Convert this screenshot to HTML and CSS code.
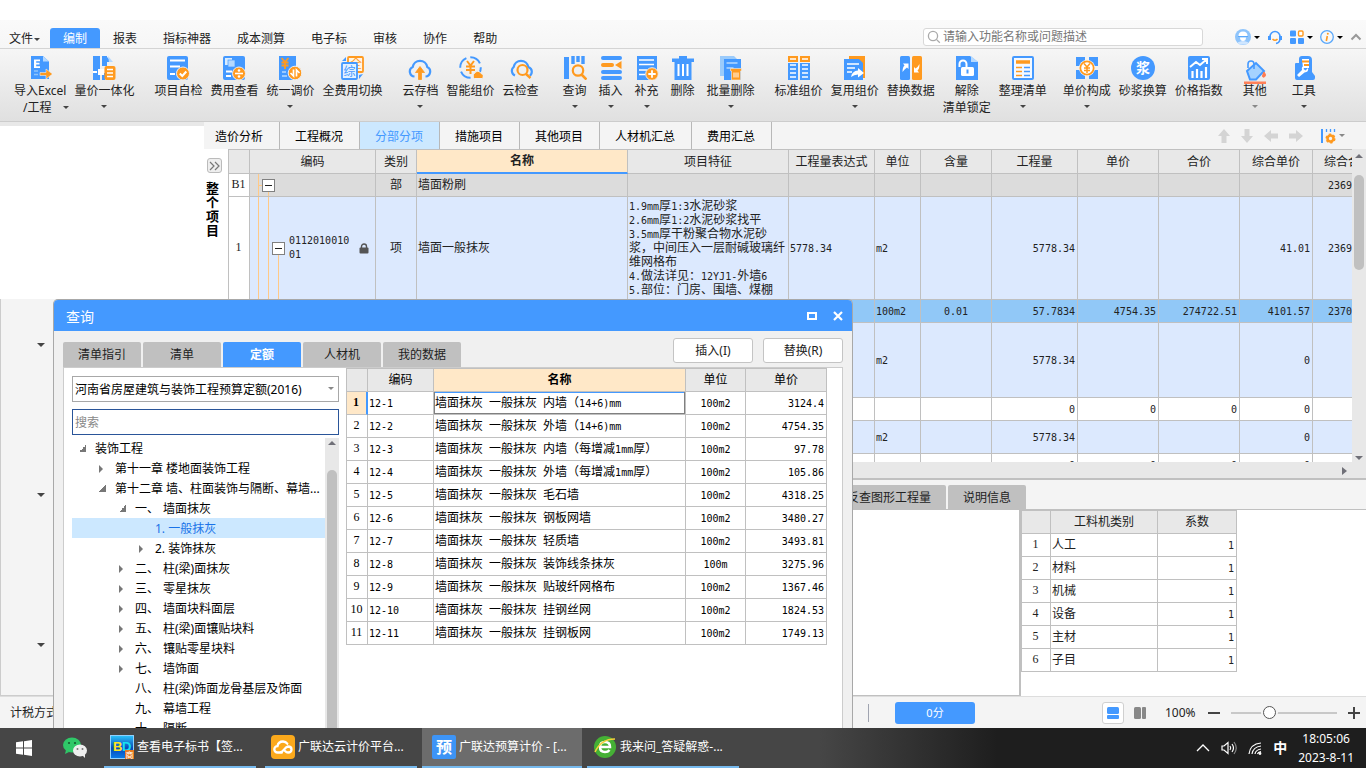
FILE: index.html
```
<!DOCTYPE html>
<html lang="zh-CN">
<head>
    <meta charset="UTF-8">
    <meta name="viewport" content="width=device-width, initial-scale=1.0">
    <title>广联达预算计价</title>
    <link rel="stylesheet" href="styles.css">
</head>
<body>
<div class="app">
    <!-- menu bar -->
    <header class="menubar">
        <nav class="menu">
            <button class="menu-item file">文件<i class="caret small"></i></button>
            <button class="menu-item active">编制</button>
            <button class="menu-item">报表</button>
            <button class="menu-item">指标神器</button>
            <button class="menu-item">成本测算</button>
            <button class="menu-item">电子标</button>
            <button class="menu-item">审核</button>
            <button class="menu-item">协作</button>
            <button class="menu-item">帮助</button>
        </nav>
        <label class="search">
            <svg width="14" height="14" viewBox="0 0 14 14" fill="none" stroke="#aaa" stroke-width="1.3"><circle cx="6" cy="6" r="4.6"/><path d="M9.4 9.4l3.4 3.4"/></svg>
            <input type="text" placeholder="请输入功能名称或问题描述" aria-label="功能搜索">
        </label>
        <div class="menu-right">
            <button aria-label="用户"><svg width="16" height="16" viewBox="0 0 16 16"><circle cx="8" cy="8" r="8" fill="#8ec4fb"/><path d="M3.500 7q0-4.500 4.500-4.500t4.500 4.500z" fill="#fff"/><path d="M3 7.500h10" stroke="#5aa8fb"/><path d="M5 8.500q0 3.500 3 3.500t3-3.500z" fill="#fff"/><path d="M2.500 13.500q5.500-3 11 0l-2 2h-7z" fill="#cfe6ff"/></svg><i class="caret dark"></i></button>
            <button aria-label="客服"><svg width="16" height="16" viewBox="0 0 16 16" fill="none"><path d="M3 8a5 5.500 0 0 1 10 0" stroke="#49f" stroke-width="1.500"/><path d="M2.500 7v4M13.500 7v4" stroke="#49f" stroke-width="3"/><path d="M13 11q-1 3-4 3.500" stroke="#49f" stroke-width="1.500"/><path d="M5.500 10q2.500 2.500 5 0" stroke="#ff9a1f" stroke-width="1.500"/></svg></button>
            <button aria-label="应用"><svg width="14" height="14" viewBox="0 0 14 14"><rect y="0.500" width="6" height="6" rx="1" fill="#49f"/><rect x="8.500" y="1" width="4.500" height="5" rx="1" fill="#fff" stroke="#ff9a1f" stroke-width="1.400"/><rect y="8" width="6" height="6" rx="1" fill="#49f"/><rect x="8" y="8" width="6" height="6" rx="1" fill="#49f"/></svg><i class="caret dark"></i></button>
            <button aria-label="关于"><svg width="14" height="14" viewBox="0 0 14 14" fill="none"><circle cx="7" cy="7" r="6.300" stroke="#5aa8fb" stroke-width="1.300"/><path d="M7.300 6l-1 5" stroke="#ff9a1f" stroke-width="1.600"/><circle cx="7.800" cy="3.700" r="1" fill="#ff9a1f"/></svg><i class="caret dark"></i></button>
            <button aria-label="收起"><svg width="12" height="8" viewBox="0 0 12 8" fill="none" stroke="#999" stroke-width="2"><path d="M1.500 6.500L6 2l4.500 4.500"/></svg></button>
        </div>
    </header>

    <!-- ribbon -->
    <div class="ribbon">
        <div class="group">
            <button class="tool"><svg viewBox="0 0 24 24"><path d="M3 0h12l6 5.500V23H3z" fill="#49f"/><path d="M15 0v5.500h6z" fill="#b5d9ff"/><path d="M6 3.500h6v1.800H8.200v1.500h3.300v1.800H8.200v1.700H12V12H6z" fill="#fff"/><path d="M6 15h4M6 18.500h4" stroke="#8ec4fb" stroke-width="1.500"/><path d="M12 16.500h6v-3.500l6.500 5-6.500 5v-3.500h-6z" fill="#ff9a1f" stroke="#eee" stroke-width=".6"/></svg><span>导入Excel</span><span class="second">/工程<i class="caret beside"></i></span></button>
            <button class="tool"><svg viewBox="0 0 24 24"><path d="M1 0h7v24H1zM10 0h5v10h-5zM10 17h3v7h-3zM14 0l6 6h-6z" fill="#49f"/><path d="M16 0l5 6h-4z" fill="#b5d9ff"/><path d="M1 16h4M9 13v5" stroke="#fff" stroke-width="2"/><rect x="6" y="13" width="6" height="6" fill="#fff"/><rect x="12.500" y="10" width="11" height="14" rx="2" fill="#ff9a1f"/><path d="M15 13.500h6M15 17h6M15 20.500h6" stroke="#fff" stroke-width="1.600"/></svg><span>量价一体化</span><i class="caret"></i></button>
        </div>
        <div class="group">
            <button class="tool"><svg viewBox="0 0 24 24"><rect x="1" width="21" height="24" rx="2" fill="#49f"/><path d="M4 4.500h15M4 10.500h10M4 18h5" stroke="#fff" stroke-width="1.800"/><circle cx="17" cy="17.500" r="6.500" fill="#ff9a1f" stroke="#eee"/><path d="M13.800 17.500l2.500 2.500 4-4.500" stroke="#fff" stroke-width="2" fill="none"/></svg><span>项目自检</span></button>
            <button class="tool"><svg viewBox="0 0 24 24"><rect x="1" width="22" height="24" rx="2" fill="#49f"/><rect x="3" y="2" width="7" height="7" fill="#d9ecff"/><rect x="6" y="4" width="7" height="7" fill="#b5d9ff" stroke="#49f" stroke-width=".7"/><path d="M4 15.500h6M4 20h5" stroke="#fff" stroke-width="1.800"/><circle cx="17" cy="17.500" r="6.500" fill="#ff9a1f" stroke="#eee"/><path d="M13 17.500h8" stroke="#fff" stroke-width="1.600"/><circle cx="17" cy="14.500" r="1.300" fill="#fff"/><circle cx="17" cy="20.500" r="1.300" fill="#fff"/></svg><span>费用查看</span></button>
            <button class="tool"><svg viewBox="0 0 24 24"><path d="M1 0h17v24H1z" fill="#49f"/><path d="M3.500 2l3.500 4 3.500-4M7 6v7M3.500 6.500h7M3.500 9.500h7" stroke="#ff9a1f" stroke-width="1.800" fill="none"/><path d="M4 16h4M4 20h5" stroke="#b5d9ff" stroke-width="1.700"/><circle cx="17" cy="17" r="6.800" fill="#ff9a1f" stroke="#eee"/><path d="M15.500 13.500v6.500l-3-3M18.500 20.500V14l3 3" stroke="#fff" stroke-width="1.700" fill="none"/></svg><span>统一调价</span><i class="caret"></i></button>
            <button class="tool"><svg viewBox="0 0 24 24"><rect x="8" y="1" width="15" height="15" rx="1" fill="#fff4e4" stroke="#ff9a1f" stroke-width="1.800"/><text x="10" y="12" font-size="12" fill="#ff9a1f">全</text><rect x="2" y="7" width="15" height="16" rx="1" fill="#e3f1ff" stroke="#49f" stroke-width="1.800"/><text x="3.500" y="19.500" font-size="12" fill="#49f">综</text><path d="M2 5l4-4v4zM23 18l-4 5v-4z" fill="#49f"/></svg><span>全费用切换</span></button>
        </div>
        <div class="group">
            <button class="tool"><svg viewBox="0 0 24 24" fill="none"><path d="M6.500 20.500A5 5 0 0 1 4.700 11a7.400 7.400 0 0 1 14.600 0 5 5 0 0 1-1.800 9.500" stroke="#49f" stroke-width="2.200"/><path d="M10.500 23.500v-7H7.500L12 10.500l4.500 6h-3v7z" fill="#ff9a1f" stroke="#ff9a1f" stroke-width=".8"/></svg><span>云存档</span><i class="caret"></i></button>
            <button class="tool"><svg viewBox="0 0 24 24" fill="none"><circle cx="11.500" cy="11.500" r="10.300" stroke="#49f" stroke-width="2" stroke-dasharray="12 4"/><path d="M8 5l3.500 4.500L15 5M11.500 9v9M7 10.500h9M7 14h9" stroke="#ff9a1f" stroke-width="2"/><path d="M15.500 22.500a3 3 0 0 1 0-5 3.500 3.500 0 0 1 6.500 0 2.700 2.700 0 0 1 1 5z" fill="#ff9a1f" stroke="#eee"/></svg><span>智能组价</span></button>
            <button class="tool"><svg viewBox="0 0 24 24" fill="none"><path d="M6 19.500A5 5 0 0 1 4.700 11a7.400 7.400 0 0 1 14.600 0q3.500 1.500 3.500 4.500t-2 4" stroke="#49f" stroke-width="2.200"/><circle cx="13.500" cy="14" r="5" stroke="#ff9a1f" stroke-width="2.200"/><path d="M17 18l4.500 4" stroke="#ff9a1f" stroke-width="2.500"/></svg><span>云检查</span></button>
        </div>
        <div class="group wide spaced">
            <button class="tool"><svg viewBox="0 0 24 24" fill="none"><path d="M3.500 1v22" stroke="#49f" stroke-width="5"/><path d="M10 0v8M15 0v6M20 0v8" stroke="#49f" stroke-width="3.400"/><circle cx="15" cy="14.500" r="5.200" stroke="#ff9a1f" stroke-width="2.200"/><path d="M18.500 18.500l5 5" stroke="#ff9a1f" stroke-width="2.600"/></svg><span>查询</span><i class="caret"></i></button>
            <button class="tool"><svg viewBox="0 0 24 24" fill="none" stroke-width="4" stroke-linecap="round"><path d="M4 2h17M4 16h17M4 22h17" stroke="#49f"/><path d="M4 9h9" stroke="#ff9a1f"/><path d="M16 9l6.500-4v8z" fill="#ff9a1f"/></svg><span>插入</span><i class="caret"></i></button>
            <button class="tool"><svg viewBox="0 0 24 24"><path d="M2 0h20v14H2zM2 14h14v10H2z" fill="#49f"/><path d="M4 4h15M4 8.500h15M4 14h8M4 18.500h6" stroke="#fff" stroke-width="1.500"/><circle cx="17" cy="18" r="6.300" fill="#ff9a1f" stroke="#eee"/><path d="M17 14.300v7.400M13.300 18h7.400" stroke="#fff" stroke-width="1.800"/></svg><span>补充</span><i class="caret"></i></button>
            <button class="tool"><svg viewBox="0 0 24 24"><path d="M1 2.500h7V0h8v2.500h7V6H1zM3.500 6h17v18h-17z" fill="#49f"/><path d="M7.500 8v12M12 8v12M16.500 8v12" stroke="#fff" stroke-width="2"/></svg><span>删除</span></button>
            <button class="tool"><svg viewBox="0 0 24 24"><path d="M1 0h14l3 3v17H1z" fill="#9bcbfb"/><path d="M5 3h17v21H5z" fill="#49f"/><path d="M7.500 7h11M7.500 12h7" stroke="#b5d9ff" stroke-width="1.700"/><path d="M11.500 12.500h11v2.500h-1v9h-9v-9h-1z" fill="#ff9a1f" stroke="#eee" stroke-width=".6"/><path d="M15 16.500v5M17 16.500v5M19 16.500v5" stroke="#fff"/></svg><span>批量删除</span><i class="caret"></i></button>
        </div>
        <div class="group">
            <button class="tool"><svg viewBox="0 0 24 24"><path d="M1 7h10v17H1zM13 7h10v17H13z" fill="#49f"/><path d="M1 0h10v6H1zM13 0h10v6H13z" fill="#ff9a1f"/><path d="M3 3h6M15 3h6M3 9h6M15 9h6M3 13h6M15 13h6M3 17h6M15 17h6M3 21h6M15 21h6" stroke="#fff" stroke-width="1.400"/></svg><span>标准组价</span></button>
            <button class="tool"><svg viewBox="0 0 24 24"><path d="M6 0h16v22H6z" fill="#ff9a1f"/><path d="M1 3h15l4 4v17H1z" fill="#49f"/><path d="M4 8h12M4 12h8M4 16h5" stroke="#fff" stroke-width="1.700"/><path d="M8 21q1-6 7-6.500V12l6 5-6 4.500V18.500q-4 0-7 2.500z" fill="#fff"/></svg><span>复用组价</span><i class="caret"></i></button>
            <button class="tool"><svg viewBox="0 0 24 24"><rect x="1" width="10" height="24" rx="1.500" fill="#49f"/><rect x="13" width="10" height="24" rx="1.500" fill="#ff9a1f"/><path d="M3.500 16q0-5 2-6.500L4 7.500h5.500V13L8 11.500Q5.500 13 3.500 16zM20.500 8q0 5-2 6.500l1.500 2h-5V11l1.500 1.500Q19 11 20.500 8z" fill="#fff"/></svg><span>替换数据</span></button>
            <button class="tool"><svg viewBox="0 0 24 24"><path d="M1 0h14l8 6v18H1z" fill="#49f"/><path d="M16 0v6h7z" fill="#b5d9ff"/><rect x="6" y="11" width="13" height="9" rx="1.500" fill="#fff"/><path d="M4.500 11V8a3.500 3.500 0 0 1 7 0v3" fill="none" stroke="#fff" stroke-width="2"/><path d="M12.500 13.500v4" stroke="#49f" stroke-width="2"/></svg><span>解除</span><span class="second">清单锁定</span></button>
            <button class="tool"><svg viewBox="0 0 24 24" fill="none"><rect x="2" y="1" width="20" height="22" rx="1" fill="#f4f9ff" stroke="#49f" stroke-width="2"/><path d="M5 6h14" stroke="#ff9a1f" stroke-width="3.500"/><path d="M5 11.500h6M5 15.500h6M5 19.500h6" stroke="#ff9a1f" stroke-width="1.700"/><path d="M13 11.500h6M13 15.500h6M13 19.500h6" stroke="#49f" stroke-width="1.700"/></svg><span>整理清单</span><i class="caret"></i></button>
        </div>
        <div class="group tight">
            <button class="tool"><svg viewBox="0 0 24 24" fill="none"><path d="M1 1h9v9H1zM14 1h9v9h-9zM1 14h9v9H1zM14 14h9v9h-9z" fill="#49f"/><circle cx="12" cy="12" r="8" fill="#fff"/><circle cx="12" cy="12" r="6.700" stroke="#ff9a1f" stroke-width="1.800"/><path d="M9 7.500l3 3.500 3-3.500M12 11v6M9 12h6M9 14.500h6" stroke="#ff9a1f" stroke-width="1.500"/></svg><span>单价构成</span><i class="caret"></i></button>
            <button class="tool"><svg viewBox="0 0 24 24"><circle cx="12" cy="12" r="12" fill="#49f"/><text x="5" y="17" font-size="14" font-weight="bold" fill="#fff">浆</text></svg><span>砂浆换算</span></button>
            <button class="tool"><svg viewBox="0 0 24 24" fill="none"><rect x="1" width="22" height="24" rx="2" fill="#49f"/><path d="M3 11l6-5 4 3 7-6M15 3h5v5" stroke="#fff" stroke-width="2"/><path d="M5.500 15v7M10 13v9M14.500 15v7M19 11v11" stroke="#fff" stroke-width="2.200"/></svg><span>价格指数</span></button>
        </div>
        <div class="group last">
            <button class="tool"><svg viewBox="0 0 24 28" class="tall"><path d="M4 15l9-8 8 8-8 8.500H7z" fill="#a5d2ff" stroke="#49f" stroke-width="2"/><path d="M5 12V8a3 3 0 0 1 6 0v5" fill="none" stroke="#49f" stroke-width="1.600"/><path d="M21 16q3 4 0 5t0-5z" fill="#ff7a50" stroke="#ff7a50"/><path d="M1 27h22" stroke="#ff8058" stroke-width="3"/></svg><span>其他</span><i class="caret grey"></i></button>
            <button class="tool"><svg viewBox="0 0 24 24"><path d="M3 22V8q0-1 1-1h3V3q0-3 3-3h6q4 0 4 4v12l3 4v2q0 2-2 2H5q-2 0-2-2z" fill="#49f"/><path d="M10 3h7v9h-6z" fill="#fff"/><path d="M10 5.500h7M12 9h5" stroke="#ff9a1f" stroke-width="1.800"/><path d="M5 19l5-5q-1-4 3-4l-1.500 3 2 1.500L16 12q1 4-3.500 4.500L7 21z" fill="#fff"/></svg><span>工具</span><i class="caret"></i></button>
        </div>
    </div>

    <!-- page tabs -->
    <div class="page-tabs">
        <div class="tabs-blank"></div>
        <button class="page-tab first">造价分析</button>
        <button class="page-tab">工程概况</button>
        <button class="page-tab active">分部分项</button>
        <button class="page-tab">措施项目</button>
        <button class="page-tab">其他项目</button>
        <button class="page-tab">人材机汇总</button>
        <button class="page-tab">费用汇总</button>
        <div class="move-btns">
            <button aria-label="上移"><svg width="14" height="16" viewBox="0 0 14 16"><path d="M7 1l6 7h-3.500v7h-5V8H1z"/></svg></button>
            <button aria-label="下移"><svg width="14" height="16" viewBox="0 0 14 16"><path d="M7 15l6-7h-3.500V1h-5v7H1z"/></svg></button>
            <button aria-label="左移"><svg width="16" height="14" viewBox="0 0 16 14"><path d="M1 7l7-6v3.500h7v5H8V13z"/></svg></button>
            <button aria-label="右移"><svg width="16" height="14" viewBox="0 0 16 14"><path d="M15 7L8 1v3.500H1v5h7V13z"/></svg></button>
            <button class="setting" aria-label="设置"><svg width="15" height="16" viewBox="0 0 15 16"><path d="M1 1v14" stroke="#49f" stroke-width="2"/><path d="M5.500 1v3M9.500 1v3M13.500 1v3" stroke="#49f" stroke-width="1.300"/><circle cx="9.500" cy="10.500" r="3" fill="none" stroke="#ff9a1f" stroke-width="2.600"/><circle cx="9.500" cy="10.500" r="4.300" fill="none" stroke="#ff9a1f" stroke-width="1.500" stroke-dasharray="2.400 2.100"/></svg><i class="caret grey"></i></button>
        </div>
    </div>

    <!-- workspace -->
    <div class="workspace">
        <aside class="nav">
            <div class="nav-top"></div>
            <div class="nav-tree"><i class="caret"></i><i class="caret"></i><i class="caret"></i></div>
        </aside>
        <aside class="strip">
            <button class="expand" aria-label="展开"><svg width="11" height="10" viewBox="0 0 11 10" fill="none" stroke="#777" stroke-width="1.200"><path d="M1 1l4 4-4 4M6 1l4 4-4 4"/></svg></button>
            <strong>整个项目</strong>
        </aside>
        <main class="main">
            <div class="upper">
                <div class="grid-wrap">
                    <table class="grid bill" id="bill">
                        <colgroup><col style="width:21px"><col style="width:126px"><col style="width:41px"><col style="width:211px"><col style="width:161px"><col style="width:86px"><col style="width:46px"><col style="width:71px"><col style="width:86px"><col style="width:81px"><col style="width:81px"><col style="width:73px"><col style="width:71px"></colgroup>
                        <thead><tr><th></th><th>编码</th><th>类别</th><th class="current">名称</th><th>项目特征</th><th>工程量表达式</th><th>单位</th><th>含量</th><th>工程量</th><th>单价</th><th>合价</th><th>综合单价</th><th>综合合价</th></tr></thead>
                        <tbody></tbody>
                    </table>
                </div>
                <div class="vscroll"><i class="arrow up"></i><i class="thumb"></i><i class="arrow down"></i></div>
                <div class="hscroll"><i class="arrow right"></i></div>
            </div>
            <div class="lower">
                <div class="lower-tabs">
                    <button>反查图形工程量</button>
                    <button>说明信息</button>
                </div>
                <div class="lower-body">
                    <div class="lower-left"></div>
                    <table class="grid factor" id="factor">
                        <colgroup><col style="width:29px"><col style="width:107px"><col style="width:79px"></colgroup>
                        <thead><tr><th></th><th>工料机类别</th><th>系数</th></tr></thead>
                        <tbody></tbody>
                    </table>
                </div>
            </div>
        </main>
    </div>

    <!-- status bar -->
    <footer class="statusbar">
        <span>计税方式</span>
        <div class="status-right">
            <i class="divider"></i>
            <button class="score">0分</button>
            <button class="view on" aria-label="上下布局"><svg width="12" height="12" viewBox="0 0 12 12" fill="#49f"><rect width="12" height="7" rx="1.500"/><rect y="8" width="12" height="4" rx="1"/></svg></button>
            <button class="view" aria-label="左右布局"><svg width="12" height="12" viewBox="0 0 12 12" fill="#888"><rect width="7" height="12" rx="1.500"/><rect x="8" width="4" height="12" rx="1"/></svg></button>
            <label for="zoom">100%</label>
            <button class="step" aria-label="缩小"><svg width="12" height="12" viewBox="0 0 12 12"><path d="M0 6h12" stroke="#444" stroke-width="2"/></svg></button>
            <input type="range" id="zoom" min="0" max="100" value="34">
            <button class="step" aria-label="放大"><svg width="12" height="12" viewBox="0 0 12 12"><path d="M0 6h12M6 0v12" stroke="#444" stroke-width="2"/></svg></button>
        </div>
    </footer>

    <!-- query dialog -->
    <section class="dialog">
        <div class="dialog-title">
            <h2>查询</h2>
            <button aria-label="最大化"><svg width="10" height="8" viewBox="0 0 10 8" fill="none" stroke="#fff" stroke-width="2"><rect x="1" y="1" width="8" height="6"/></svg></button>
            <button aria-label="关闭"><svg width="10" height="10" viewBox="0 0 10 10" stroke="#fff" stroke-width="2.200"><path d="M1 1l8 8M9 1L1 9"/></svg></button>
        </div>
        <div class="dialog-bar">
            <div class="dialog-tabs">
                <button>清单指引</button>
                <button>清单</button>
                <button class="active">定额</button>
                <button>人材机</button>
                <button>我的数据</button>
            </div>
            <button class="act">插入(I)</button>
            <button class="act">替换(R)</button>
        </div>
        <div class="dialog-body">
            <div class="picker">
                <div class="select-box">
                    <select aria-label="定额库"><option>河南省房屋建筑与装饰工程预算定额(2016)</option></select>
                    <i class="caret grey"></i>
                </div>
                <input class="find" type="text" placeholder="搜索" aria-label="搜索">
                <div class="tree-wrap">
                    <ul class="tree">
                        <li class="l0 open">装饰工程</li>
                        <li class="l1 closed">第十一章 楼地面装饰工程</li>
                        <li class="l1 open">第十二章 墙、柱面装饰与隔断、幕墙...</li>
                        <li class="l2 open"><b>一、</b>墙面抹灰</li>
                        <li class="l3 selected">1. 一般抹灰</li>
                        <li class="l3 closed">2. 装饰抹灰</li>
                        <li class="l2 closed"><b>二、</b>柱(梁)面抹灰</li>
                        <li class="l2 closed"><b>三、</b>零星抹灰</li>
                        <li class="l2 closed"><b>四、</b>墙面块料面层</li>
                        <li class="l2 closed"><b>五、</b>柱(梁)面镶贴块料</li>
                        <li class="l2 closed"><b>六、</b>镶贴零星块料</li>
                        <li class="l2 closed"><b>七、</b>墙饰面</li>
                        <li class="l2"><b>八、</b>柱(梁)饰面龙骨基层及饰面</li>
                        <li class="l2"><b>九、</b>幕墙工程</li>
                        <li class="l2"><b>十、</b>隔断</li>
                    </ul>
                    <div class="tree-scroll"><i class="arrow up"></i><i class="thumb"></i></div>
                </div>
            </div>
            <table class="grid quota" id="quota">
                <colgroup><col style="width:21px"><col style="width:66px"><col style="width:252px"><col style="width:60px"><col style="width:81px"></colgroup>
                <thead><tr><th></th><th>编码</th><th class="current">名称</th><th>单位</th><th>单价</th></tr></thead>
                <tbody></tbody>
            </table>
        </div>
    </section>

    <!-- windows taskbar -->
    <div class="taskbar">
        <button class="start" aria-label="开始"><svg width="16" height="16" viewBox="0 0 16 16" fill="#fff"><path d="M0 2.300l7-1v6.200H0zM8 1.200L16 0v7.500H8zM0 8.500h7v6.200l-7-1zM8 8.500h8V16l-8-1.200z"/></svg></button>
        <button class="wechat" aria-label="微信"><svg width="24" height="22" viewBox="0 0 24 22"><ellipse cx="9" cy="8" rx="9" ry="7.500" fill="#2fc868"/><path d="M3 13l-1 4 4-2z" fill="#2fc868"/><circle cx="6" cy="6" r="1.100" fill="#145c30"/><circle cx="12" cy="6" r="1.100" fill="#145c30"/><ellipse cx="17" cy="13.500" rx="7" ry="6" fill="#eee"/><path d="M19 18l3 3v-4z" fill="#eee"/><circle cx="14.500" cy="12" r="1" fill="#777"/><circle cx="19.500" cy="12" r="1" fill="#777"/></svg></button>
        <button class="task"><svg width="24" height="24" viewBox="0 0 24 24"><defs><linearGradient id="bd" x2="0" y2="1"><stop stop-color="#2cc4fa"/><stop offset=".55" stop-color="#0848b8"/><stop offset="1" stop-color="#0a7ce8"/></linearGradient></defs><rect x=".5" y=".5" width="23" height="23" fill="url(#bd)" stroke="#8fd0ff"/><text x="3" y="16" font-size="13" font-weight="bold" fill="#ffe419">B</text><text x="12" y="16" font-size="13" font-weight="bold" fill="#16e0f0">D</text><rect x="15" y="15" width="9" height="9" fill="#e87a20"/><text x="15.500" y="22.500" font-size="8" fill="#fff">商</text></svg><span>查看电子标书【签...</span></button>
        <button class="task"><svg width="24" height="24" viewBox="0 0 24 24" fill="none"><rect width="24" height="24" rx="4" fill="#fba91c"/><path d="M11 17.500H6.500a3.200 3.200 0 0 1 0-6.400q.8-4.600 5.500-4.600 2.800 0 4.300 2.200M8.500 17.500q2.500 0 4.500-2.800t4-3.200q3.500 0 3.500 3t-3.500 3q-1.500 0-3-1.500" stroke="#fff" stroke-width="2.300" stroke-linecap="round"/></svg><span>广联达云计价平台...</span></button>
        <button class="task current"><svg width="24" height="24" viewBox="0 0 24 24"><rect width="24" height="24" rx="2" fill="#3d94f6"/><text x="4" y="18" font-size="16" font-weight="bold" fill="#fff">预</text></svg><span>广联达预算计价 - [...</span></button>
        <button class="task"><svg width="24" height="24" viewBox="0 0 24 24" fill="none"><circle cx="12" cy="12" r="11" fill="#45b035"/><path d="M7 12h10q0-5-5-5t-5 5 5 5q3 0 4.500-2" stroke="#fff" stroke-width="2.500"/><path d="M2 17Q8 4 22 4" stroke="#f4d23a" stroke-width="1.500"/></svg><span>我来问_答疑解惑-...</span></button>
        <div class="tray">
            <svg width="14" height="8" viewBox="0 0 14 8" fill="none" stroke="#fff" stroke-width="1.300"><path d="M1 7l6-6 6 6"/></svg>
            <svg width="16" height="14" viewBox="0 0 16 14" fill="none" stroke="#fff" stroke-width="1.200"><path d="M1 5v4h2l4 3.500v-11L3 5zM9 5q1.500 2 0 4M11 3q3 4 0 8"/><path d="M13 1q4.500 6 0 12" stroke="#888"/></svg>
            <svg width="14" height="13" viewBox="0 0 14 13" fill="none" stroke="#fff" stroke-width="1.200"><path d="M1 12Q2 2 13 1M4 12q1-7 9-8M7 12q.5-4 6-5M9.500 12q.5-2 3.500-2.500"/><circle cx="12" cy="11.500" r=".8" fill="#fff"/></svg>
            <span class="ime">中</span>
            <div class="clock"><div>18:05:06</div><div>2023-8-11</div></div>
        </div>
    </div>
</div>
<script src="script.js"></script>
</body>
</html>
```
FILE: styles.css
```
* {
    box-sizing: border-box;
}
body {
    margin: 0;
    font-family: "Noto Sans", "Noto Sans CJK SC", sans-serif;
    font-size: 12px;
    line-height: 16px;
    color: #222;
    background: #fff;
}
button, input, select {
    font: inherit;
    color: inherit;
    border: none;
    background: none;
    padding: 0;
    margin: 0;
    border-radius: 0;
    outline: none;
}
button {
    cursor: pointer;
    white-space: nowrap;
}
svg {
    display: block;
    flex: none;
}
svg text {
    font-family: "Liberation Sans", "Noto Sans CJK SC", sans-serif;
}
.app {
    position: relative;
    display: flex;
    flex-direction: column;
    height: 100vh;
    overflow: hidden;
}
.caret {
    display: inline-block;
    border: 3px solid transparent;
    border-top-color: #444;
    border-bottom: none;
}
.caret.small {
    margin-left: 1px;
    vertical-align: middle;
}
.caret.grey {
    border-top-color: #888;
}
.caret.dark {
    border-top-color: #000;
}
.arrow {
    border: 4px solid transparent;
    flex: none;
}
.arrow.up {
    border-bottom-color: #707078;
    border-top: none;
}
.arrow.down {
    border-top-color: #707078;
    border-bottom: none;
}
.arrow.right {
    border-left: 5px solid #707078;
    border-right: none;
}
.thumb {
    background: #c0c0c0;
    border-radius: 5px;
}

/* menu bar */
.menubar {
    display: flex;
    align-items: flex-end;
    height: 49px;
    padding-top: 20px;
    border-bottom: 1px solid #d4d4d4;
    background: linear-gradient(#fff 20px, #fafafa 20px, #f6f6f6);
}
.menu {
    display: flex;
    flex: 1;
}
.menu-item {
    height: 20px;
    padding: 2px 13px 0;
}
.menu-item.file {
    padding: 2px 10px 0 9px;
}
.menu-item.active {
    background: #49f;
    color: #fff;
    border-radius: 3px 3px 0 0;
}
.search {
    display: flex;
    align-items: center;
    gap: 2px;
    width: 280px;
    height: 18px;
    padding: 0 3px;
    margin-bottom: 2px;
    background: #fff;
    border: 1px solid #d8d8d8;
    border-radius: 3px;
}
.search input {
    flex: 1;
    height: 16px;
}
.search input::placeholder {
    color: #777;
    opacity: 1;
}
.menu-right {
    display: flex;
    align-items: center;
    height: 22px;
    gap: 7px;
    padding: 0 4px 0 32px;
}
.menu-right button {
    display: flex;
    align-items: center;
    gap: 3px;
}

/* ribbon */
.ribbon {
    display: flex;
    height: 73px;
    padding-left: 14px;
    background: linear-gradient(#f6f6f6, #e0e0e0);
    border-bottom: 1px solid #ccc;
    flex: none;
}
.group {
    display: flex;
    align-items: flex-start;
    gap: 8px;
    margin-right: 20px;
}
.group.wide {
    gap: 12px;
}
.group.spaced {
    margin-left: 4px;
}
.group.last {
    gap: 25px;
}
.group.tight {
    margin-left: -4px;
}
.tool {
    position: relative;
    display: flex;
    flex-direction: column;
    align-items: center;
    padding-top: 7px;
}
.tool svg {
    width: 24px;
    height: 24px;
    margin-bottom: 3px;
}
.tool svg.tall {
    height: 28px;
    margin-bottom: -1px;
}
.tool .caret {
    margin-top: 6px;
}
.tool .second {
    margin-top: 1px;
}
.tool .caret.beside {
    margin: 0 -12px 3px 12px;
}

/* page tabs */
.page-tabs {
    display: flex;
    height: 27px;
    background: #f4f4f4;
    flex: none;
}
.tabs-blank {
    width: 204px;
    border-top: 4px solid #e8e8e8;
    background: #fff;
    flex: none;
}
.page-tab {
    padding: 2px 16px 0 15px;
    border-right: 1px solid #b8b8b8;
    color: #000;
}
.page-tab.first {
    padding-left: 11px;
}
.page-tab.active {
    background: #cce8ff;
    color: #49f;
}
.move-btns {
    display: flex;
    align-items: center;
    gap: 9px;
    margin-left: auto;
    padding-right: 21px;
}
.move-btns svg {
    fill: #d4d4d4;
}
.move-btns .setting {
    display: flex;
    align-items: center;
    gap: 3px;
    margin-left: 8px;
}

/* workspace */
.workspace {
    display: flex;
    flex: 1;
    min-height: 0;
}
.nav {
    display: flex;
    flex-direction: column;
    width: 204px;
    flex: none;
}
.nav-top {
    height: 150px;
    background: #fff;
}
.nav-tree {
    display: flex;
    flex-direction: column;
    flex: 1;
    gap: 146px;
    padding: 44px 0 0 36px;
    background: #f4f4f4;
    border-left: 1px solid #ccc;
    border-bottom: 1px solid #ccc;
}
.nav-tree .caret {
    width: 8px;
    border-width: 4px;
    border-bottom: none;
}
.strip {
    display: flex;
    flex-direction: column;
    align-items: flex-start;
    width: 24px;
    padding: 9px 0 0 2px;
    background: #fff;
    flex: none;
}
.expand {
    display: flex;
    align-items: center;
    justify-content: center;
    width: 15px;
    height: 15px;
    margin-left: 1px;
    border: 1px solid #bbb;
    border-radius: 3px;
    background: #eee;
}
.strip strong {
    width: 13px;
    margin-top: 8px;
    font-size: 13px;
    line-height: 14px;
    color: #000;
}
.main {
    display: flex;
    flex-direction: column;
    flex: 1;
    min-width: 0;
}

/* grids */
.grid {
    table-layout: fixed;
    border-collapse: separate;
    border-spacing: 0;
    border-left: 1px solid #c0c0c0;
    border-top: 1px solid #c0c0c0;
    font-family: "Noto Sans CJK SC", sans-serif;
    line-height: 14px;
    flex: none;
}
.grid th, .grid td {
    height: 23px;
    padding: 0 1px 2px;
    border-right: 1px solid #c0c0c0;
    border-bottom: 1px solid #c0c0c0;
    text-align: left;
    white-space: pre;
    overflow: hidden;
}
.grid th {
    background: #e8e8e8;
    font-weight: normal;
    text-align: center;
}
.grid th.current {
    background: #ffe8c8;
    font-weight: bold;
}
.grid td:first-child {
    background: #fff;
    text-align: center;
    padding-right: 2px;
}
.grid .center {
    text-align: center;
}
.grid .right {
    text-align: right;
    padding-right: 2px;
}
.latin {
    font-family: "DejaVu Sans Mono", monospace;
    font-size: 10px;
    line-height: 10px;
}
.upper {
    display: grid;
    grid-template-columns: 1fr 14px;
    grid-template-rows: 1fr 14px;
    height: 331px;
    border-bottom: 2px solid #c0c0c0;
    background: #e8e8e8;
    flex: none;
}
.grid-wrap {
    min-width: 0;
    min-height: 0;
    margin-bottom: 2px;
    overflow: hidden;
    background: #fff;
}
.bill {
    width: 1155px;
}
.bill th {
    height: 24px;
}
.bill th.current {
    border-bottom: 2px solid #49f;
}
.bill tr.part td {
    background: #dcdcdc;
}
.bill tr.item td {
    background: #dce9fe;
}
.bill tr.chosen td {
    background: #91c8f7;
}
.bill tbody tr td:first-child {
    background: #fff;
}
.bill td.total {
    padding-left: 15px;
}
.bill td.code {
    padding-bottom: 0;
}
.bill tr.part td.code, .bill tr.item td.code {
    background-image: linear-gradient(#ffc987, #ffc987), linear-gradient(#ffc987, #ffc987), linear-gradient(#ffc987, #ffc987);
    background-repeat: no-repeat;
}
.bill tr.part td.code {
    background-size: 1px 100%, 1px 50%, 6px 1px;
    background-position: 8px 0, 18px 100%, 8px 50%;
}
.bill tr.item td.code {
    background-size: 1px 100%, 1px 100%, 1px 50%;
    background-position: 8px 0, 18px 0, 28px 100%;
}
.node {
    display: flex;
    align-items: center;
    padding-left: 11px;
}
.item .node {
    padding-left: 21px;
}
.node .minus {
    width: 13px;
    height: 13px;
    border: 1px solid #808080;
    background: linear-gradient(#222, #222) center / 7px 1px no-repeat #fff;
}
.node .latin {
    flex: 1;
    margin-left: 4px;
    line-height: 14px;
}
.node svg {
    margin-right: 5px;
}
.vscroll {
    display: flex;
    flex-direction: column;
    align-items: center;
    padding: 5px 0 4px;
}
.vscroll .thumb {
    width: 10px;
    height: 95px;
    margin: 17px 0 auto;
}
.hscroll {
    display: flex;
    align-items: center;
    justify-content: flex-end;
    padding-right: 5px;
}

/* lower pane */
.lower {
    display: flex;
    flex-direction: column;
    flex: 1;
    background: #fff;
    min-height: 0;
}
.lower-tabs {
    display: flex;
    gap: 2px;
    height: 30px;
    padding: 5px 0 0 604px;
    background: #f4f4f4;
    border-bottom: 1px solid #c0c0c0;
    flex: none;
}
.lower-tabs button {
    padding: 1px 15px 0;
    background: #c0c0c0;
    border-radius: 2px 2px 0 0;
}
.lower-body {
    display: flex;
    align-items: flex-start;
    flex: 1;
}
.lower-left {
    align-self: stretch;
    width: 793px;
    border-right: 2px solid #c0c0c0;
    border-bottom: 1px solid #c0c0c0;
}
.factor {
    width: 216px;
}

/* status bar */
.statusbar {
    display: flex;
    align-items: center;
    justify-content: space-between;
    height: 32px;
    padding-left: 10px;
    background: #f4f4f4;
    border-top: 1px solid #ddd;
    flex: none;
}
.status-right {
    display: flex;
    align-items: center;
    padding-right: 6px;
}
.divider {
    width: 1px;
    height: 18px;
    background: #a0a4b0;
}
.score {
    width: 80px;
    height: 22px;
    margin: 0 127px 0 26px;
    background: #49f;
    color: #fff;
    font-size: 11px;
    border-radius: 3px;
}
.view {
    display: flex;
    align-items: center;
    justify-content: center;
    width: 22px;
    height: 22px;
    margin-right: 5px;
    border-radius: 3px;
}
.view.on {
    background: #fff;
    border: 1px solid #d0d0d0;
}
.status-right label {
    width: 34px;
    margin: 0 9px;
    white-space: nowrap;
}
#zoom {
    -webkit-appearance: none;
    appearance: none;
    width: 106px;
    height: 14px;
    margin: 0 11px;
}
#zoom::-webkit-slider-runnable-track {
    height: 2px;
    background: #c8c8c8;
}
#zoom::-webkit-slider-thumb {
    -webkit-appearance: none;
    width: 13px;
    height: 13px;
    margin-top: -6px;
    background: #fff;
    border: 1px solid #555;
    border-radius: 50%;
    box-shadow: 0 0 0 2px #f4f4f4;
}

/* query dialog, floats over the workspace */
.dialog {
    position: absolute;
    left: 53px;
    top: 299px;
    bottom: 40px;
    width: 800px;
    display: flex;
    flex-direction: column;
    background: #f0f0f0;
    border: 1px solid #a8a8a8;
    border-bottom: none;
    border-radius: 5px 5px 0 0;
    overflow: hidden;
}
.dialog-title {
    display: flex;
    align-items: center;
    gap: 16px;
    height: 31px;
    padding: 0 9px 0 12px;
    background: #49f;
    color: #fff;
    flex: none;
}
.dialog-title h2 {
    flex: 1;
    margin: 2px 0 0;
    font-size: 14px;
    font-weight: normal;
}
.dialog-bar {
    display: flex;
    gap: 10px;
    height: 36px;
    padding: 7px 9px 0;
    flex: none;
}
.dialog-tabs {
    display: flex;
    gap: 2px;
    flex: 1;
    padding-top: 4px;
}
.dialog-tabs button {
    width: 78px;
    background: #c0c0c0;
    border-radius: 2px 2px 0 0;
}
.dialog-tabs .active {
    background: #49f;
    color: #fff;
    font-weight: bold;
}
.act {
    width: 80px;
    height: 25px;
    background: #fff;
    border: 1px solid #c4c4c4;
    border-radius: 3px;
}
.dialog-body {
    display: flex;
    flex: 1;
    align-items: flex-start;
    min-height: 0;
    margin: 0 9px;
    background: #fff;
    border: 1px solid #ccc;
    border-bottom: none;
}
.picker {
    display: flex;
    flex-direction: column;
    align-self: stretch;
    width: 282px;
    padding: 8px 7px 0 8px;
    color: #000;
    flex: none;
}
.select-box {
    position: relative;
}
.select-box select {
    -webkit-appearance: none;
    appearance: none;
    display: block;
    width: 100%;
    height: 26px;
    padding: 1px 2px 0;
    border: 1px solid #a8a8a8;
}
.select-box .caret {
    position: absolute;
    right: 5px;
    top: 11px;
}
.find {
    height: 26px;
    margin: 7px 0 3px;
    padding: 1px 2px 0;
    border: 1px solid #2a5599;
}
.find::placeholder {
    color: #888;
    opacity: 1;
}
.tree-wrap {
    display: flex;
    flex: 1;
    min-height: 0;
    overflow: hidden;
}
.tree {
    flex: 1;
    margin: 0;
    padding: 0;
    list-style: none;
    white-space: nowrap;
}
.tree li {
    display: flex;
    align-items: center;
    height: 20px;
    padding-top: 1px;
}
.tree li::before {
    content: "";
    box-sizing: border-box;
    flex: none;
    width: 7px;
    height: 7px;
    margin-right: 9px;
}
.tree .open::before {
    background: linear-gradient(135deg, transparent 50%, #777 50%);
}
.tree .closed::before {
    width: 4px;
    height: 8px;
    margin-right: 12px;
    border: 4px solid transparent;
    border-left-color: #777;
    border-right: none;
}
.tree .l0 {
    padding-left: 7px;
}
.tree .l1 {
    padding-left: 27px;
}
.tree .l2 {
    padding-left: 47px;
}
.tree .l3 {
    padding-left: 67px;
}
.tree b {
    width: 28px;
    font-weight: normal;
}
.tree .selected {
    background: #cce8ff;
    color: #1a73e8;
}
.tree-scroll {
    display: flex;
    flex-direction: column;
    align-items: center;
    width: 14px;
    padding-top: 3px;
    background: #e8e8e8;
}
.tree-scroll .thumb {
    flex: 1;
    width: 10px;
    margin-top: 25px;
    border-radius: 5px 5px 0 0;
}
.quota {
    width: 481px;
    color: #000;
}
.quota .focus td:first-child {
    background: #ffe8c8;
    font-weight: bold;
    border-right: 2px solid #49f;
}
.quota .focus .name {
    box-shadow: inset 1px 0 #808080, inset -1px -1px #808080, inset 0 1px #49f;
}
.quota td:first-child, .factor td:first-child, .bill td:first-child {
    font-family: "Liberation Serif", serif;
}

/* taskbar */
.taskbar {
    display: flex;
    align-items: stretch;
    height: 40px;
    background: linear-gradient(90deg, #464646 60%, #1e1e1e 73%);
    color: #fff;
    flex: none;
}
.start {
    padding: 0 16px;
}
.wechat {
    padding: 0 17px 0 15px;
}
.task {
    display: flex;
    align-items: center;
    gap: 3px;
    width: 152px;
    margin-right: 9px;
    padding-left: 6px;
    border-bottom: 2px solid #76b9ed;
}
.task.current {
    width: 160px;
    margin: 0 5px 0 -4px;
    padding-left: 10px;
    background: #6c6c6c;
}
.tray {
    display: flex;
    align-items: center;
    gap: 11px;
    margin-left: auto;
    padding-right: 12px;
}
.tray .ime {
    font-size: 14px;
    font-weight: bold;
}
.clock {
    line-height: 19px;
    text-align: center;
}
```
FILE: script.js
```
const lock = '<svg width="10" height="11" viewBox="0 0 10 11"><path d="M2.500 5V3.500a2.500 2.500 0 0 1 5 0V5" fill="none" stroke="#555" stroke-width="1.400"/><rect x="0.500" y="4.500" width="9" height="6" rx="1" fill="#555"/></svg>';
const feature = '1.9mm厚1:3水泥砂浆\n2.6mm厚1:2水泥砂浆找平\n3.5mm厚干粉聚合物水泥砂\n浆，中间压入一层耐碱玻璃纤\n维网格布\n4.做法详见：12YJ1-外墙6\n5.部位：门房、围墙、煤棚';

// row class, height, cells
const billRows = [
    ['part', 23, ['B1', '', '部', '墙面粉刷', '', '', '', '', '', '', '', '', '2369']],
    ['item', 103, ['1', '0112010010\n01', '项', '墙面一般抹灰', feature, '5778.34', 'm2', '', '5778.34', '', '', '41.01', '2369']],
    ['chosen', 23, ['', '', '', '', '', '', '100m2', '0.01', '57.7834', '4754.35', '274722.51', '4101.57', '2370']],
    ['item', 75, ['', '', '', '', '', '', 'm2', '', '5778.34', '', '', '0', '']],
    ['', 23, ['', '', '', '', '', '', '', '', '0', '0', '0', '0', '']],
    ['item', 33, ['', '', '', '', '', '', 'm2', '', '5778.34', '', '', '0', '']],
    ['', 23, ['', '', '', '', '', '', '', '', '0', '0', '0', '0', '']]
];
const billClass = ['', 'code', 'center', '', '', '', '', 'center', 'right', 'right', 'right', 'right', 'total'];

const quotaRows = [
    ['内墙（14+6)mm', '100m2', '3124.4'],
    ['外墙（14+6)mm', '100m2', '4754.35'],
    ['内墙（每增减1mm厚）', '100m2', '97.78'],
    ['外墙（每增减1mm厚）', '100m2', '105.86'],
    ['毛石墙', '100m2', '4318.25'],
    ['钢板网墙', '100m2', '3480.27'],
    ['轻质墙', '100m2', '3493.81'],
    ['装饰线条抹灰', '100m', '3275.96'],
    ['贴玻纤网格布', '100m2', '1367.46'],
    ['挂钢丝网', '100m2', '1824.53'],
    ['挂钢板网', '100m2', '1749.13']
];

const factorRows = ['人工', '材料', '机械', '设备', '主材', '子目'];

// latin letters and digits are half the width of a chinese character
function half(text) {
    return text.replace(/[\x20-\x7e]+/g, '<span class="latin">$&</span>');
}

function codeCell(text) {
    return `<div class="node"><i class="minus"></i>${text ? `<span class="latin">${text}</span>${lock}` : ''}</div>`;
}

document.querySelector('#bill tbody').innerHTML = billRows.map(([cls, height, cells]) => {
    const tds = cells.map((cell, i) => {
        let body = half(cell);
        if (i === 0) body = cell;
        if (i === 1 && cells[0]) body = codeCell(cell);
        return `<td class="${billClass[i]}">${body}</td>`;
    });
    return `<tr class="${cls}" style="height:${height}px">${tds.join('')}</tr>`;
}).join('');

document.querySelector('#quota tbody').innerHTML = quotaRows.map(([name, unit, price], i) => `
    <tr class="${i === 0 ? 'focus' : ''}"><td>${i + 1}</td><td>${half('12-' + (i + 1))}</td><td class="name">${half('墙面抹灰 一般抹灰 ' + name)}</td><td class="center">${half(unit)}</td><td class="right">${half(price)}</td></tr>`).join('');

document.querySelector('#factor tbody').innerHTML = factorRows.map((name, i) => `
    <tr><td>${i + 1}</td><td>${name}</td><td class="right">${half('1')}</td></tr>`).join('');
```
